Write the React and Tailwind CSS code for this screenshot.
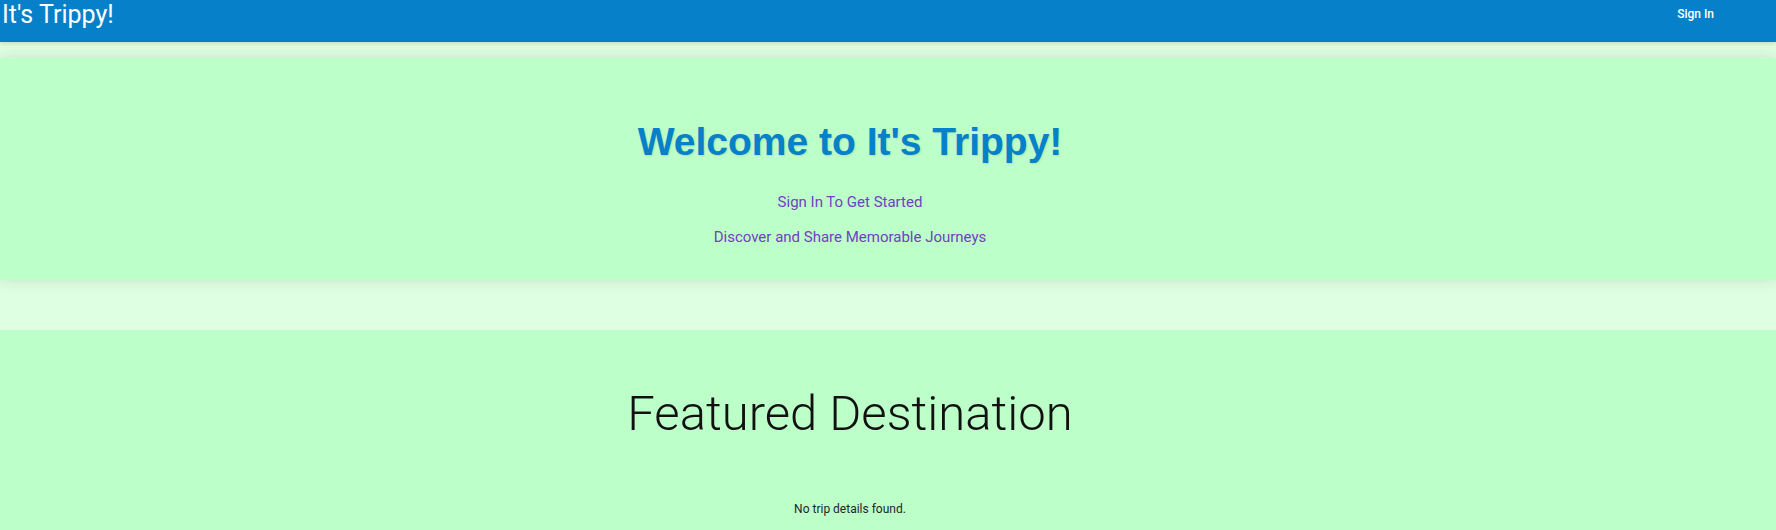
export default function App() {
  return (
    <div
      className="flex min-h-screen flex-col bg-[#dfffe3]"
      style={{ fontFamily: "Roboto, 'Liberation Sans', sans-serif" }}
    >
      <nav className="relative z-10 flex h-[42px] items-start justify-between bg-[#0780ca] pl-[2px] pr-[62px] shadow-[0_2px_4px_rgba(0,0,0,0.12)]">
        <span className="text-[25px] leading-[29px] text-white">
          It's Trippy!
        </span>
        <button className="mt-[6px] text-[12px] font-medium leading-[16px] text-white">
          Sign In
        </button>
      </nav>

      <section className="mt-[16px] bg-[#bdffc8] pb-[31px] pt-[61px] shadow-[0_0_14px_rgba(0,0,0,0.13)]">
        <div className="flex flex-col items-center pr-[76px] text-center">
          <h1
            className="text-[39px] font-bold leading-[46px] text-[#0780ca] [text-shadow:1px_1px_2px_rgba(0,0,0,0.12)]"
            style={{ fontFamily: "'Liberation Sans', Arial, sans-serif" }}
          >
            Welcome to It's Trippy!
          </h1>
          <p className="mt-[25px] text-[15px] leading-[24px] text-[#6f42c1]">
            Sign In To Get Started
          </p>
          <p className="mt-[11px] text-[15px] leading-[24px] text-[#6f42c1]">
            Discover and Share Memorable Journeys
          </p>
        </div>
      </section>

      <section className="mt-[50px] flex-1 bg-[#bdffc8] pt-[54px]">
        <div className="flex flex-col items-center pr-[76px] text-center">
          <h2 className="text-[49px] font-light leading-[59px] text-[#111]">
            Featured Destination
          </h2>
          <p className="mt-[57px] text-[12px] leading-[18px] text-[#212529]">
            No trip details found.
          </p>
        </div>
      </section>
    </div>
  );
}
